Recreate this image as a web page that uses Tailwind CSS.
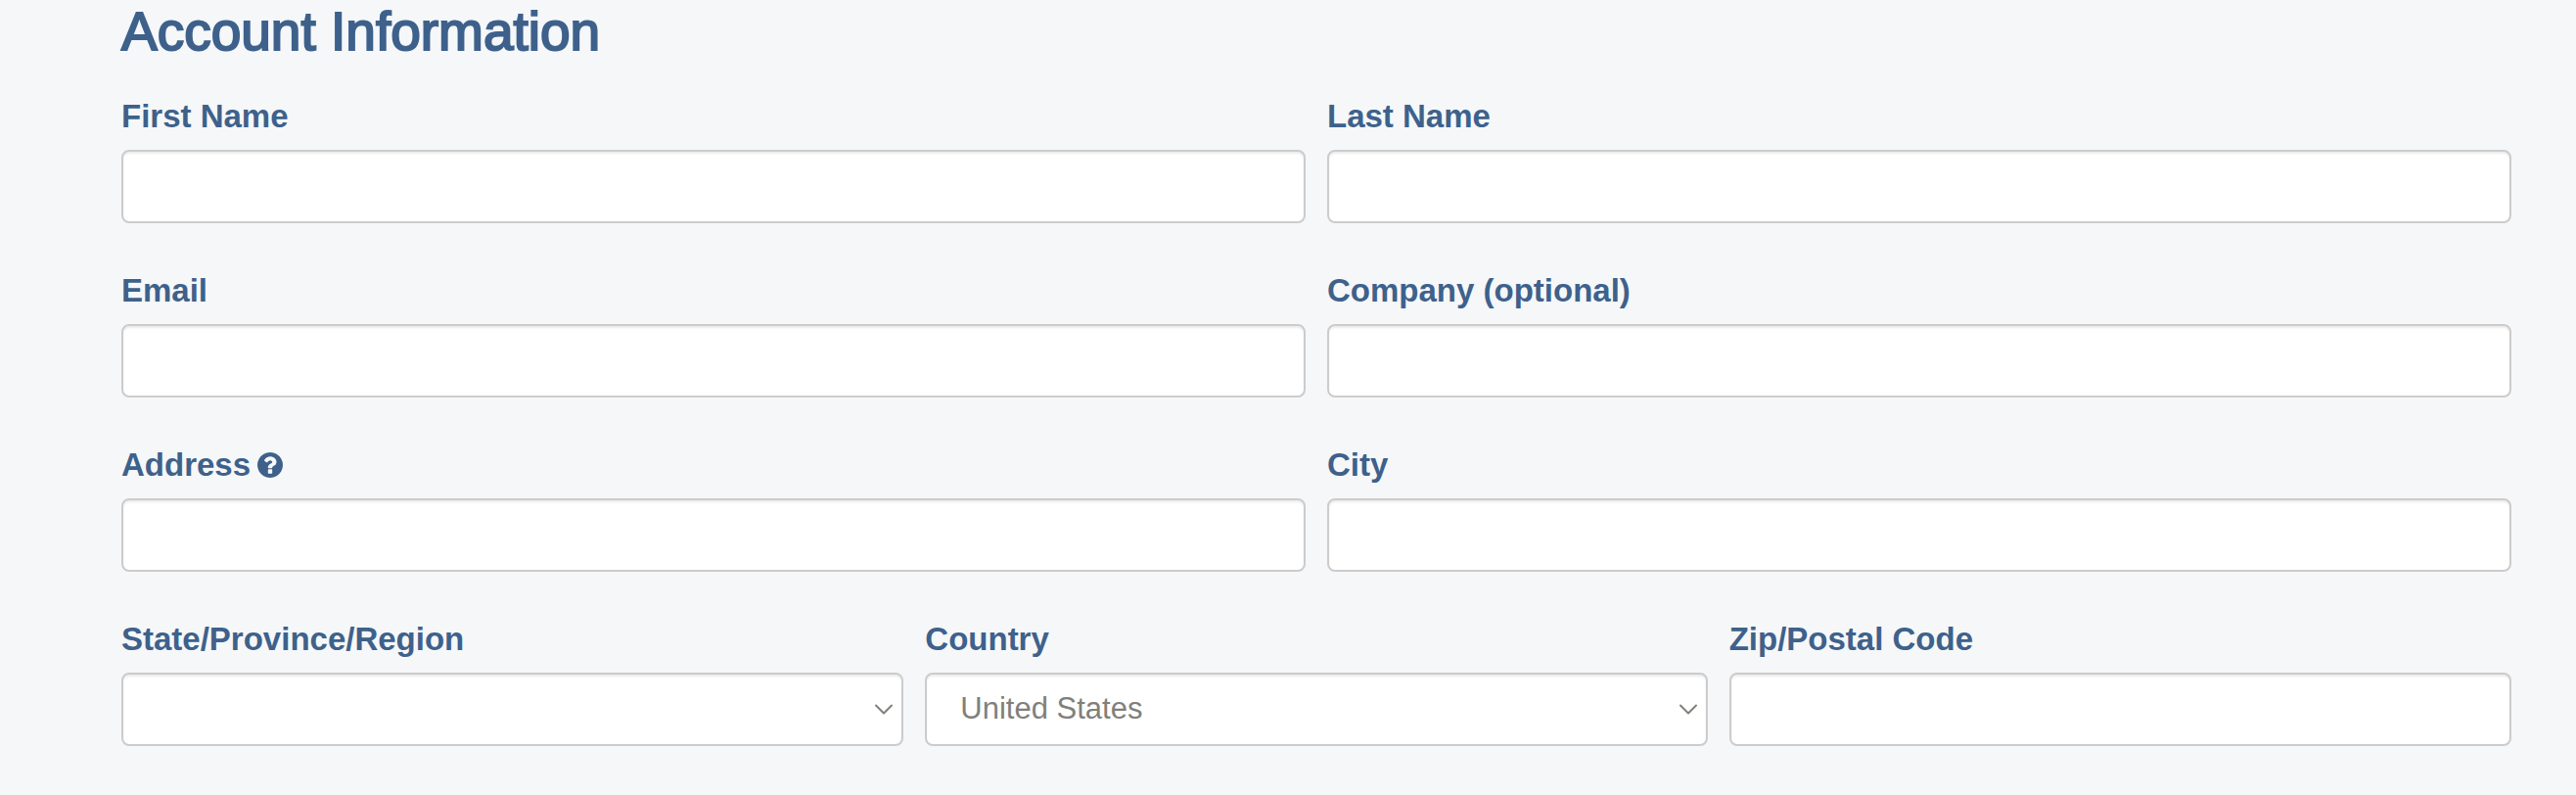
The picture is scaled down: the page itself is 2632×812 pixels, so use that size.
<!DOCTYPE html>
<html lang="en">
<head>
<meta charset="utf-8">
<meta name="viewport" content="width=device-width, initial-scale=1">
<title>Account Information</title>
<script src="https://cdn.jsdelivr.net/npm/@tailwindcss/browser@4"></script>
</head>
<body class="min-h-screen bg-[#f5f7f9] font-['Liberation_Sans',Arial,sans-serif] text-[#3e618b]">
<form class="flex flex-col pt-0.5 pr-[66px] pb-[50px] pl-[124px]">
  <h2 class="mb-[39px] text-[55px] leading-[60px] font-normal [-webkit-text-stroke:2px_#3e618b]">Account Information</h2>

  <div class="flex flex-col gap-[51px]">
    <div class="grid grid-cols-2 gap-x-[22px] gap-y-[51px]">
      <div class="flex flex-col gap-4">
        <label for="first-name" class="text-[33px] leading-9 font-bold">First Name</label>
        <input id="first-name" type="text" class="h-[75px] w-full rounded-lg border-2 border-[#ccc] bg-white px-[34px] text-[31px] text-[#80807b] shadow-[inset_0_2px_2px_rgba(0,0,0,0.075)]">
      </div>
      <div class="flex flex-col gap-4">
        <label for="last-name" class="text-[33px] leading-9 font-bold">Last Name</label>
        <input id="last-name" type="text" class="h-[75px] w-full rounded-lg border-2 border-[#ccc] bg-white px-[34px] text-[31px] text-[#80807b] shadow-[inset_0_2px_2px_rgba(0,0,0,0.075)]">
      </div>
      <div class="flex flex-col gap-4">
        <label for="email" class="text-[33px] leading-9 font-bold">Email</label>
        <input id="email" type="email" class="h-[75px] w-full rounded-lg border-2 border-[#ccc] bg-white px-[34px] text-[31px] text-[#80807b] shadow-[inset_0_2px_2px_rgba(0,0,0,0.075)]">
      </div>
      <div class="flex flex-col gap-4">
        <label for="company" class="text-[33px] leading-9 font-bold">Company (optional)</label>
        <input id="company" type="text" class="h-[75px] w-full rounded-lg border-2 border-[#ccc] bg-white px-[34px] text-[31px] text-[#80807b] shadow-[inset_0_2px_2px_rgba(0,0,0,0.075)]">
      </div>
      <div class="flex flex-col gap-4">
        <div class="flex items-center gap-[7px]">
          <label for="address" class="text-[33px] leading-9 font-bold">Address</label>
          <button type="button" aria-label="Address help" class="size-[26px]">
            <svg viewBox="0 0 1536 1536" class="size-[26px]" fill="currentColor" aria-hidden="true"><path d="M896 1248v-192q0-14-9-23t-23-9h-192q-14 0-23 9t-9 23v192q0 14 9 23t23 9h192q14 0 23-9t9-23zm256-672q0-88-55.500-163t-138.500-116-170-41q-243 0-371 213-15 24 8 42l132 100q7 6 19 6 16 0 25-12 53-68 86-92 34-24 86-24 48 0 85.500 26t37.500 59q0 38-20 61t-68 45q-63 28-115.500 86.500t-52.500 125.500v36q0 14 9 23t23 9h192q14 0 23-9t9-23q0-19 21.500-49.500t54.500-49.500q32-18 49-28.500t46-35 44.500-48 28-60.500 12.500-81zm384 192q0 209-103 385.500t-279.500 279.500-385.500 103-385.500-103-279.500-279.500-103-385.500 103-385.500 279.500-279.500 385.500-103 385.500 103 279.500 279.500 103 385.500z"/></svg>
          </button>
        </div>
        <input id="address" type="text" class="h-[75px] w-full rounded-lg border-2 border-[#ccc] bg-white px-[34px] text-[31px] text-[#80807b] shadow-[inset_0_2px_2px_rgba(0,0,0,0.075)]">
      </div>
      <div class="flex flex-col gap-4">
        <label for="city" class="text-[33px] leading-9 font-bold">City</label>
        <input id="city" type="text" class="h-[75px] w-full rounded-lg border-2 border-[#ccc] bg-white px-[34px] text-[31px] text-[#80807b] shadow-[inset_0_2px_2px_rgba(0,0,0,0.075)]">
      </div>
    </div>

    <div class="grid grid-cols-3 gap-x-[22px]">
      <div class="flex flex-col gap-4">
        <label for="state" class="text-[33px] leading-9 font-bold">State/Province/Region</label>
        <div class="relative">
          <select id="state" class="block h-[75px] w-full appearance-none rounded-lg border-2 border-[#ccc] bg-white px-[34px] text-[31px] text-[#80807b] shadow-[inset_0_2px_2px_rgba(0,0,0,0.075)]">
            <option selected></option>
          </select>
          <svg viewBox="0 0 20 12" class="pointer-events-none absolute top-8 right-2.5 h-3 w-5" fill="none" stroke="#80807b" stroke-width="2" stroke-linecap="round" stroke-linejoin="round" aria-hidden="true"><path d="M2 1.500 10 9.500 18 1.500"/></svg>
        </div>
      </div>
      <div class="flex flex-col gap-4">
        <label for="country" class="text-[33px] leading-9 font-bold">Country</label>
        <div class="relative">
          <select id="country" class="block h-[75px] w-full appearance-none rounded-lg border-2 border-[#ccc] bg-white px-[34px] text-[31px] text-[#80807b] shadow-[inset_0_2px_2px_rgba(0,0,0,0.075)]">
            <option selected>United States</option>
          </select>
          <svg viewBox="0 0 20 12" class="pointer-events-none absolute top-8 right-2.5 h-3 w-5" fill="none" stroke="#80807b" stroke-width="2" stroke-linecap="round" stroke-linejoin="round" aria-hidden="true"><path d="M2 1.500 10 9.500 18 1.500"/></svg>
        </div>
      </div>
      <div class="flex flex-col gap-4">
        <label for="zip" class="text-[33px] leading-9 font-bold">Zip/Postal Code</label>
        <input id="zip" type="text" class="h-[75px] w-full rounded-lg border-2 border-[#ccc] bg-white px-[34px] text-[31px] text-[#80807b] shadow-[inset_0_2px_2px_rgba(0,0,0,0.075)]">
      </div>
    </div>
  </div>
</form>
</body>
</html>
